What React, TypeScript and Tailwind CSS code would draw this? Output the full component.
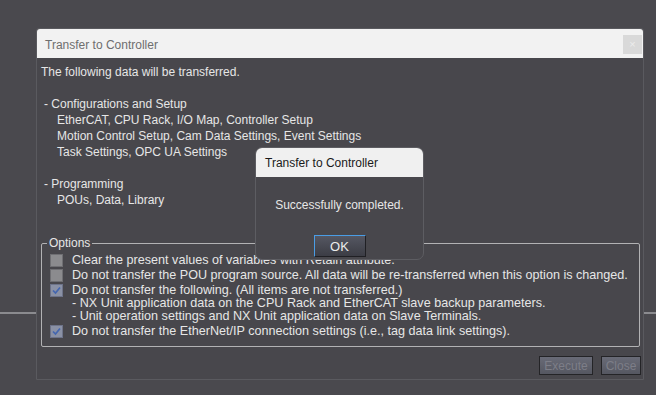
import React from 'react';

function CheckBox({ checked }: { checked?: boolean }) {
    return (
        <span
            className={
                'mt-px flex h-[13px] w-[13px] shrink-0 items-center justify-center border ' +
                (checked ? 'border-[#6d7389] bg-[#8a91a5]' : 'border-[#6f6f73] bg-[#8b8b8e]')
            }
        >
            {checked && (
                <svg width="11" height="11" viewBox="0 0 11 11">
                    <path d="M2 5.5 L4.5 8 L9 2.5" fill="none" stroke="#4366b0" strokeWidth="1.7" />
                </svg>
            )}
        </span>
    );
}

function OptionRow({ checked, children }: { checked?: boolean; children: React.ReactNode }) {
    return (
        <div className="flex h-[15px] items-center gap-[9px]">
            <CheckBox checked={checked} />
            <span className="whitespace-nowrap">{children}</span>
        </div>
    );
}

export default function App() {
    return (
        <div className="relative h-[395px] w-[656px] overflow-hidden bg-[#4a494e] font-['Liberation_Sans',Arial,sans-serif] text-[12px] text-[#e6e6e6]">
            {/* background splitter line */}
            <div className="absolute left-0 right-0 top-[312px] h-[2px] bg-[#8b8b8f]" />

            {/* main dialog */}
            <div className="absolute left-[36px] top-[28px] flex h-[352px] w-[608px] flex-col rounded-t-[3px] border border-[#5a5a5f] bg-[#48474c]">
                <div className="flex h-[29px] shrink-0 items-start justify-between rounded-t-[3px] bg-[#f2f2f2] pl-[8px]">
                    <span className="mt-[7px] text-[#6e6e6e]">Transfer to Controller</span>
                    <span className="mr-px mt-[6px] flex h-[19px] w-[19px] items-center justify-center bg-[#d9d9d9] text-[11px] leading-none text-[#ececec]">
                        ×
                    </span>
                </div>

                <div className="flex flex-1 flex-col pl-[4px] pt-[6px] leading-[16px]">
                    <div>The following data will be transferred.</div>
                    <div className="h-[16px]" />
                    <div className="pl-[3px]">- Configurations and Setup</div>
                    <div className="pl-[16px]">EtherCAT, CPU Rack, I/O Map, Controller Setup</div>
                    <div className="pl-[16px]">Motion Control Setup, Cam Data Settings, Event Settings</div>
                    <div className="pl-[16px]">Task Settings, OPC UA Settings</div>
                    <div className="h-[16px]" />
                    <div className="pl-[3px]">- Programming</div>
                    <div className="pl-[16px]">POUs, Data, Library</div>

                    {/* Options group */}
                    <div className="relative mt-[35px] w-[599px] rounded-[2px] border border-[#b2b2b4] pb-[8px] pl-[8px] pt-[8px] text-[12.6px]">
                        <span className="absolute -top-[9px] left-[5px] bg-[#48474c] px-[2px] text-[12px] leading-[16px]">Options</span>
                        <OptionRow>Clear the present values of variables with Retain attribute.</OptionRow>
                        <OptionRow>
                            Do not transfer the POU program source. All data will be re-transferred when this option is changed.
                        </OptionRow>
                        <OptionRow checked>Do not transfer the following. (All items are not transferred.)</OptionRow>
                        <div className="h-[13px] whitespace-nowrap pl-[22px] leading-[13px]">
                            - NX Unit application data on the CPU Rack and EtherCAT slave backup parameters.
                        </div>
                        <div className="h-[13px] whitespace-nowrap pl-[22px] leading-[13px]">
                            - Unit operation settings and NX Unit application data on Slave Terminals.
                        </div>
                        <OptionRow checked>
                            Do not transfer the EtherNet/IP connection settings (i.e., tag data link settings).
                        </OptionRow>
                    </div>

                    <div className="mr-[2px] mt-[9px] flex justify-end gap-[8px]">
                        <button className="h-[19px] w-[54px] border border-[#242427] bg-gradient-to-b from-[#696b77] to-[#555761] text-[12px] leading-none text-[#7d7e88]">
                            Execute
                        </button>
                        <button className="h-[19px] w-[40px] border border-[#242427] bg-gradient-to-b from-[#696b77] to-[#555761] text-[12px] leading-none text-[#7d7e88]">
                            Close
                        </button>
                    </div>
                </div>
            </div>

            {/* message box */}
            <div className="absolute left-[255px] top-[147px] flex h-[113px] w-[169px] flex-col overflow-hidden rounded-[7px] border border-[#5d5d62] bg-[#48474c]">
                <div className="flex h-[29px] shrink-0 items-center bg-[#f0f0f0] pl-[9px] text-[#1a1a1a]">
                    Transfer to Controller
                </div>
                <div className="flex flex-1 flex-col items-center pt-[20px] leading-[16px]">
                    <span>Successfully completed.</span>
                    <button className="mt-[22px] h-[22px] w-[52px] border border-b-[#202024] border-l-[#4a9de6] border-r-[#202024] border-t-[#4a9de6] bg-gradient-to-b from-[#555762] to-[#3c3d45] text-[13px] leading-none text-[#ececec]">
                        OK
                    </button>
                </div>
            </div>
        </div>
    );
}
